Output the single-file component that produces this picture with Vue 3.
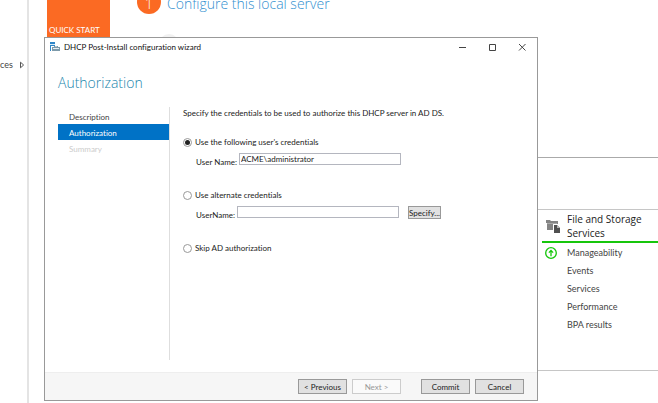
<script setup>
import { ref } from 'vue'

const steps = [
  { label: 'Description', state: 'done' },
  { label: 'Authorization', state: 'current' },
  { label: 'Summary', state: 'disabled' },
]
const roleLinks = ['Manageability', 'Events', 'Services', 'Performance', 'BPA results']
const mode = ref('current')
const currentUser = ref('ACME\\administrator')
const alternateUser = ref('')
</script>

<template>
  <div class="manager">
    <aside class="sidebar">
      <a class="side-link" href="#">ces
        <svg class="caret" viewBox="0 0 6 8"><path d="M1.5 1.2v5.6L4.6 4z" /></svg>
      </a>
    </aside>

    <main class="dashboard">
      <section class="welcome">
        <div class="quick-start">QUICK START</div>
        <div class="badge">1</div>
        <h1 class="welcome-title">Configure this local server</h1>
        <div class="next-badge"></div>
      </section>
      <section class="roles">
        <article class="role">
          <header class="role-head">
            <svg class="role-icon" viewBox="0 0 14 14">
              <path fill="#858585" d="M0 1h4l1 1h7v4H8v5H1V4H0z" />
              <path fill="#a9a9a9" d="M1 4h10v1H1z" />
              <path fill="#fff" d="M7 5h5l2 2v7H7z" />
              <path fill="#505050" d="M8 6h3l3 3v5H8z" />
              <path fill="#b5b5b5" d="M11 6v3h3z" />
            </svg>
            <h2>File and Storage Services</h2>
          </header>
          <ul class="role-links">
            <li v-for="(link, i) in roleLinks" :key="link">
              <span class="status">
                <svg v-if="i === 0" viewBox="0 0 12 12">
                  <circle cx="6" cy="6" r="5.3" />
                  <path d="M6 9.2V3.4M3.9 5.6L6 3.4l2.1 2.2" />
                </svg>
              </span>
              <a href="#">{{ link }}</a>
            </li>
          </ul>
        </article>
      </section>
    </main>

    <form class="dialog" role="dialog" aria-labelledby="wizard-title" @submit.prevent>
      <header class="titlebar">
        <svg class="app-icon" viewBox="0 0 10 10">
          <path fill="#2f86c8" d="M0 0h5v9H0z" />
          <path stroke="#d6ebf8" d="M0 2.5h5" />
          <path fill="#fff" d="M1 4h9v6H1z" />
          <path fill="#2f86c8" d="M0 4h1v5H0z" />
          <path fill="#7e9aaa" d="M2 5h2V4h4v1h2v4H2z" />
          <path fill="#e7eef2" d="M5 4.6h2V5H5zM3 6h6v1H3z" />
        </svg>
        <span id="wizard-title" class="title">DHCP Post-Install configuration wizard</span>
        <button type="button" class="window-button" aria-label="Minimize">
          <svg viewBox="0 0 8 8"><path d="M1 4.5h7" /></svg>
        </button>
        <button type="button" class="window-button" aria-label="Maximize">
          <svg viewBox="0 0 8 8"><path d="M1.5 1.5h6v6h-6z" /></svg>
        </button>
        <button type="button" class="window-button" aria-label="Close">
          <svg viewBox="0 0 8 8"><path d="M1 1l6.5 6.5M7.5 1L1 7.5" /></svg>
        </button>
      </header>

      <h2 class="page-title">Authorization</h2>

      <div class="body">
        <nav class="steps">
          <a v-for="step in steps" :key="step.label" href="#" class="step" :class="step.state">{{ step.label }}</a>
        </nav>

        <div class="content">
          <p class="intro">Specify the credentials to be used to authorize this DHCP server in AD DS.</p>

          <div class="option">
            <label class="choice"><input v-model="mode" type="radio" name="mode" value="current" />Use the following user's credentials</label>
            <div class="field">
              <label for="current-user">User Name:</label>
              <input id="current-user" v-model="currentUser" type="text" />
            </div>
          </div>

          <div class="option">
            <label class="choice"><input v-model="mode" type="radio" name="mode" value="alternate" />Use alternate credentials</label>
            <div class="field">
              <label for="alternate-user">UserName:</label>
              <input id="alternate-user" v-model="alternateUser" type="text" />
              <button type="button" class="button specify">Specify...</button>
            </div>
          </div>

          <div class="option">
            <label class="choice"><input v-model="mode" type="radio" name="mode" value="skip" />Skip AD authorization</label>
          </div>
        </div>
      </div>

      <footer class="actions">
        <button type="button" class="button">&lt; Previous</button>
        <button type="button" class="button" disabled>Next &gt;</button>
        <button type="submit" class="button commit">Commit</button>
        <button type="button" class="button">Cancel</button>
      </footer>
    </form>
  </div>
</template>

<style>
body {
  margin: 0;
  background: #fff;
}
</style>

<style scoped>
.manager {
  position: relative;
  display: flex;
  min-height: 100vh;
  overflow: hidden;
  box-sizing: border-box;
  background: #fff;
  color: #222;
  font: 8px/12px Lato, "Open Sans", sans-serif;
  font-variant-ligatures: none;
}
.manager *,
.manager *::before {
  box-sizing: border-box;
}
a {
  color: inherit;
  text-decoration: none;
}
h1,
h2,
p,
ul {
  margin: 0;
  padding: 0;
  font-weight: 400;
}
button,
input {
  font: inherit;
  color: inherit;
}

.sidebar {
  flex: 0 0 29px;
  padding-top: 59px;
  border-right: 2px solid #e4e4e4;
}
.side-link {
  display: flex;
  align-items: center;
  gap: 6px;
  color: #444;
  font-size: 9px;
}
.caret {
  width: 6px;
  height: 8px;
  fill: none;
  stroke: #555;
}
.dashboard {
  flex: 1;
  min-width: 0;
}
.welcome {
  position: relative;
  display: flex;
  height: 157px;
  padding-left: 18px;
}
.quick-start {
  display: flex;
  align-items: flex-end;
  width: 63px;
  height: 37px;
  padding: 0 2px 1px;
  background: #fb6a23;
  color: #fff;
}
.badge {
  width: 24px;
  height: 24px;
  margin: -10px 6px 0 27px;
  border-radius: 50%;
  background: #fb6a23;
  color: #fff;
  font-family: "Open Sans", sans-serif;
  font-size: 14px;
  font-weight: 300;
  line-height: 28px;
  text-align: center;
}
.welcome-title {
  margin-top: -6px;
  color: #3390d0;
  font-family: "Open Sans", sans-serif;
  font-size: 14px;
  font-weight: 300;
  line-height: 20px;
}
.next-badge {
  position: absolute;
  top: 34px;
  left: 130px;
  width: 20px;
  height: 20px;
  border-radius: 50%;
  background: #f1f1f1;
}
.roles {
  display: flex;
  justify-content: flex-end;
  margin-left: 18px;
  padding-top: 51px;
  border-top: 1px solid #aaa;
}
.role {
  width: 124px;
  height: 162px;
  border: solid #c6c6c6;
  border-width: 1px 0;
}
.role-head {
  display: flex;
  gap: 7px;
  margin-left: 8px;
  padding: 2px 0 0 4px;
  border-bottom: 2px solid #16c60c;
}
.role-icon {
  flex: none;
  width: 14px;
  height: 14px;
  margin-top: 7px;
}
.role-head h2 {
  width: 84px;
  padding-bottom: 1px;
  font-family: "Open Sans", sans-serif;
  font-size: 10px;
  line-height: 14px;
}
.role-links {
  padding-top: 1px;
  list-style: none;
  color: #444;
  font-size: 9px;
  line-height: 18px;
}
.role-links li {
  display: flex;
  align-items: center;
  height: 18px;
}
.status {
  width: 33px;
  height: 12px;
  padding-left: 11px;
}
.status svg {
  display: block;
  width: 12px;
  height: 12px;
  fill: none;
  stroke: #16c60c;
  stroke-width: 1.3;
}

.dialog {
  position: absolute;
  inset: 37px 120px 2px 44px;
  display: flex;
  flex-direction: column;
  border: 1px solid #999;
  background: #fff;
}
.titlebar {
  display: flex;
  align-items: center;
  height: 18px;
  padding-left: 5px;
}
.app-icon {
  width: 10px;
  height: 10px;
}
.title {
  flex: 1;
  margin-left: 4px;
  color: #111;
}
.window-button {
  display: grid;
  place-items: center;
  width: 30px;
  height: 18px;
  padding: 0;
  border: 0;
  background: none;
}
.window-button svg {
  width: 8px;
  height: 8px;
  fill: none;
  stroke: #444;
}
.page-title {
  padding: 16px 13px 0;
  color: #2386ad;
  font-family: "Open Sans", sans-serif;
  font-size: 14px;
  font-weight: 300;
  line-height: 22px;
}
.body {
  display: flex;
  flex: 1;
  margin: 13px 13px 12px;
}
.steps {
  display: flex;
  flex-direction: column;
  width: 112px;
  padding-top: 1px;
  border-right: 1px solid #dedede;
}
.step {
  height: 16px;
  padding-left: 11px;
  color: #444;
  line-height: 18px;
}
.step.current {
  background: #0072c6;
  color: #fff;
}
.step.disabled {
  color: #ccc;
}
.content {
  flex: 1;
  padding-left: 13px;
}
.option {
  height: 53px;
}
.intro {
  height: 29px;
}
.choice {
  display: flex;
  align-items: center;
  gap: 3px;
  height: 12px;
}
.choice input {
  display: grid;
  place-items: center;
  appearance: none;
  width: 9px;
  height: 9px;
  margin: 0;
  border: 1px solid #999;
  border-radius: 50%;
  background: #fff;
}
.choice input:checked::before {
  content: "";
  width: 5px;
  height: 5px;
  border-radius: 50%;
  background: #222;
}
.field {
  display: flex;
  gap: 2px;
  margin-top: 5px;
  padding-left: 13px;
}
.field label {
  padding-top: 3px;
}
.field input {
  width: 162px;
  height: 12px;
  padding: 0 1px;
  border: 1px solid #b4b6bf;
  background: #fff;
  line-height: 10px;
}
.button {
  width: 49px;
  height: 15px;
  padding: 0;
  border: 1px solid #999;
  background: #e1e1e1;
  line-height: 12px;
  text-align: center;
  white-space: nowrap;
}
.button:disabled {
  border-color: #ccc;
  background: #fafafa;
  color: #999;
}
.specify {
  width: 33px;
  height: 13px;
  margin-left: 7px;
}
.actions {
  display: flex;
  align-items: flex-start;
  justify-content: flex-end;
  gap: 5px;
  height: 28px;
  padding: 6px 13px 0;
  border-top: 1px solid #eee;
  background: #f6f6f6;
}
.commit {
  margin-left: 15px;
}
</style>
